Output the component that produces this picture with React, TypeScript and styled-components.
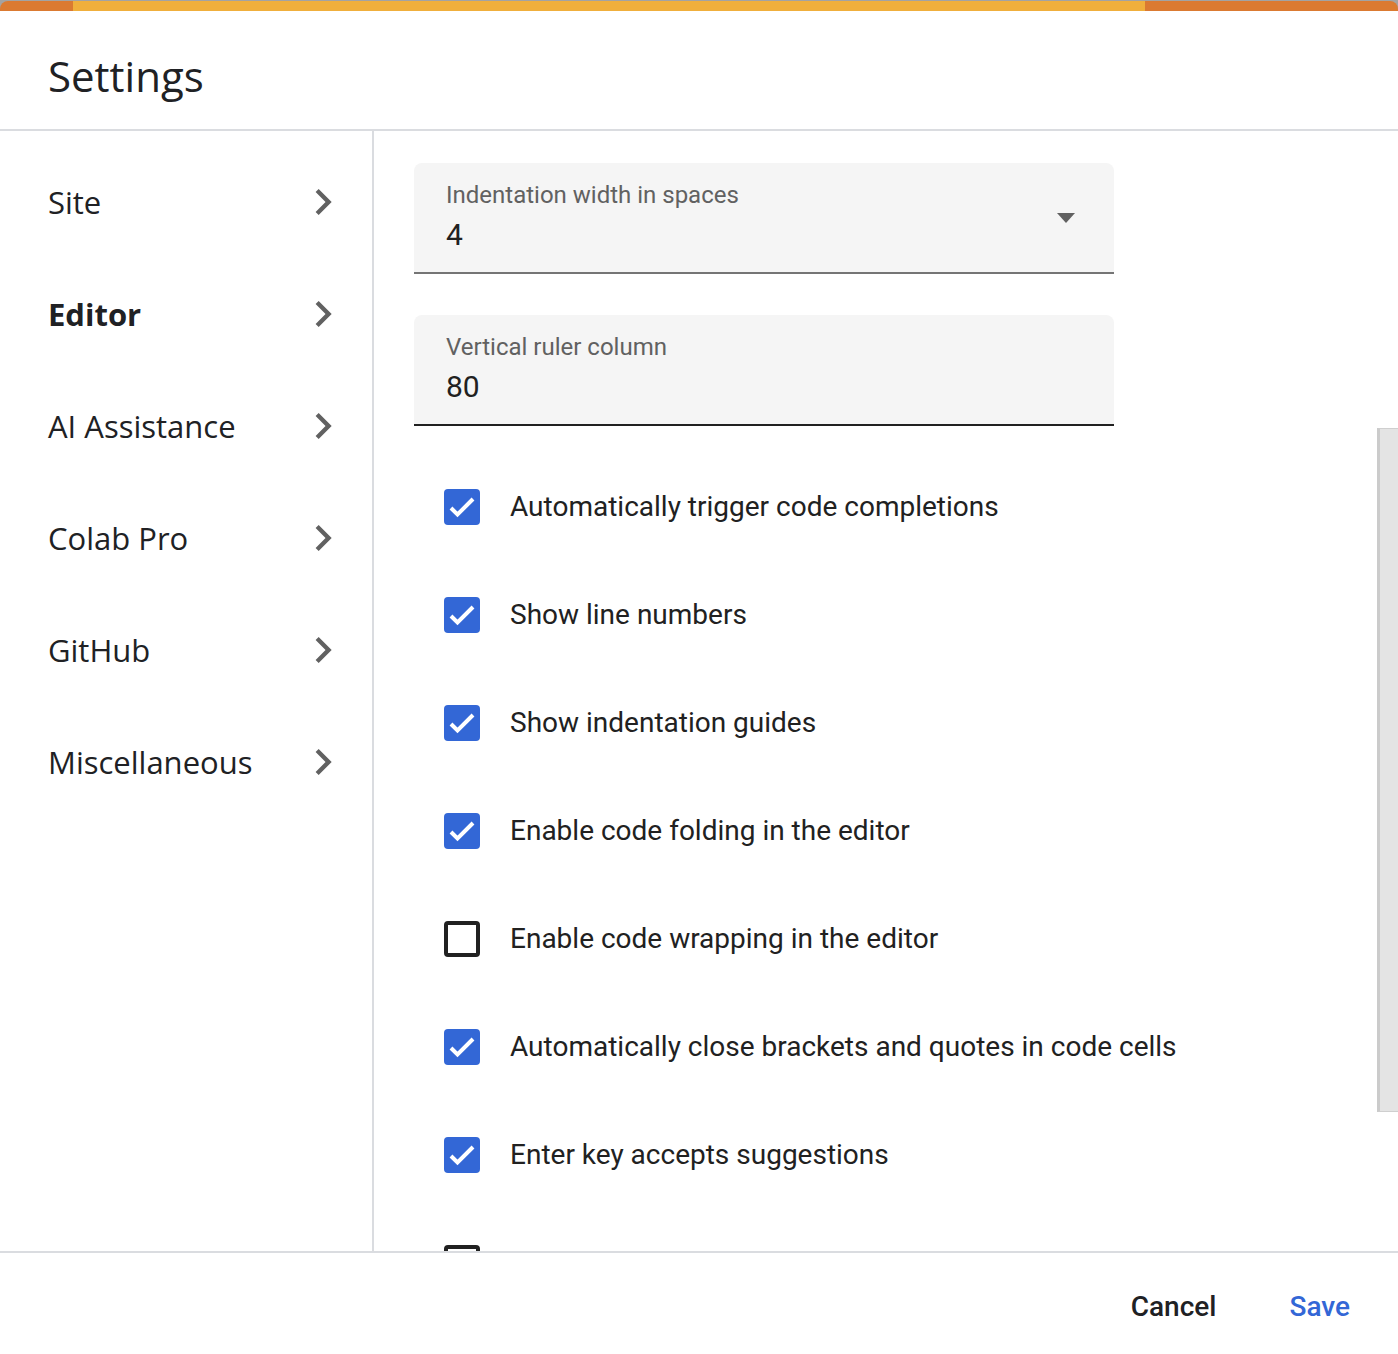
import * as React from 'react';
import styled, { createGlobalStyle } from 'styled-components';

const GlobalStyle = createGlobalStyle`
    html, body {
        margin: 0;
        padding: 0;
        background: #ffffff;
    }
    * {
        box-sizing: border-box;
    }
`;

const Dialog = styled.div`
    width: 1398px;
    height: 1354px;
    display: flex;
    flex-direction: column;
    background: #ffffff;
    overflow: hidden;
    font-family: Roboto, 'Liberation Sans', sans-serif;
    color: #202124;
`;

const TopStrip = styled.div`
    padding-top: 1px;
    background: #a3a3a3;
    flex: 0 0 auto;
`;

const TopBar = styled.div`
    display: flex;
    height: 10px;
    border-radius: 8px 8px 0 0;
    overflow: hidden;
`;

const TopSegment = styled.div<{ $width?: number; $color: string }>`
    flex: ${(p) => (p.$width ? `0 0 ${p.$width}px` : '1 1 auto')};
    background: ${(p) => p.$color};
`;

const Header = styled.div`
    flex: 0 0 auto;
    height: 120px;
    padding: 41px 0 0 48px;
    border-bottom: 2px solid #dadce0;
`;

const Title = styled.h1`
    margin: 0;
    font-family: 'Open Sans', sans-serif;
    font-size: 42px;
    line-height: 48px;
    font-weight: 400;
    color: #202124;
`;

const Body = styled.div`
    flex: 1 1 auto;
    display: flex;
    min-height: 0;
    position: relative;
`;

const Sidebar = styled.ul`
    flex: 0 0 374px;
    margin: 0;
    padding: 15px 0 0 0;
    list-style: none;
    border-right: 2px solid #dadce0;
`;

const NavItem = styled.li<{ $active?: boolean }>`
    height: 112px;
    display: flex;
    align-items: center;
    justify-content: space-between;
    padding: 0 25px 0 48px;
    font-family: 'Open Sans', sans-serif;
    font-size: 31px;
    font-weight: ${(p) => (p.$active ? 700 : 400)};
    color: #202124;
    cursor: pointer;
`;

const Chevron = styled.svg`
    width: 52px;
    height: 52px;
    margin-right: -2px;
    fill: #616161;
    flex: 0 0 auto;
`;

const Content = styled.div`
    flex: 1 1 auto;
    overflow: hidden;
    padding: 32px 0 0 40px;
`;

const Field = styled.div<{ $focused?: boolean }>`
    width: 700px;
    height: 111px;
    display: flex;
    align-items: center;
    background: #f5f5f5;
    border-radius: 8px 8px 0 0;
    border-bottom: 2px solid ${(p) => (p.$focused ? '#212121' : '#757575')};
    padding: 0 39px 0 32px;
    & + & {
        margin-top: 41px;
    }
`;

const FieldText = styled.div`
    flex: 1 1 auto;
    display: flex;
    flex-direction: column;
    padding-bottom: 4px;
`;

const FieldLabel = styled.label`
    font-size: 24px;
    line-height: 32px;
    color: #616161;
`;

const FieldValue = styled.div`
    margin-top: 6px;
    font-size: 30px;
    line-height: 36px;
    color: #212121;
`;

const DropArrow = styled.div`
    width: 0;
    height: 0;
    border-left: 9px solid transparent;
    border-right: 9px solid transparent;
    border-top: 10px solid #616161;
`;

const CheckList = styled.div`
    margin-top: 27px;
    display: flex;
    flex-direction: column;
`;

const CheckRow = styled.label`
    height: 108px;
    display: flex;
    align-items: center;
    padding-left: 30px;
    gap: 30px;
    font-size: 28px;
    line-height: 34px;
    color: #212121;
    cursor: pointer;
`;

const CheckBox = styled.span<{ $checked: boolean }>`
    width: 36px;
    height: 36px;
    flex: 0 0 auto;
    border-radius: 4px;
    display: flex;
    align-items: center;
    justify-content: center;
    background: ${(p) => (p.$checked ? '#3367d6' : '#ffffff')};
    border: ${(p) => (p.$checked ? 'none' : '4px solid #212121')};
`;

const Tick = styled.svg`
    width: 36px;
    height: 36px;
    fill: none;
    stroke: #ffffff;
    stroke-width: 4;
`;

const ScrollThumb = styled.div`
    position: absolute;
    right: 0;
    top: 297px;
    width: 21px;
    height: 684px;
    background: #e4e4e4;
    border: 1px solid #cfcfcf;
    border-left: 3px solid #cbcbcb;
    border-right: none;
`;

const Footer = styled.div`
    flex: 0 0 103px;
    display: flex;
    justify-content: flex-end;
    align-items: center;
    gap: 73px;
    padding: 6px 48px 0 0;
    border-top: 2px solid #dadce0;
`;

const FooterButton = styled.button<{ $primary?: boolean }>`
    border: none;
    background: none;
    padding: 0;
    font-family: Roboto, 'Liberation Sans', sans-serif;
    font-size: 28px;
    font-weight: 500;
    color: ${(p) => (p.$primary ? '#3367d6' : '#202124')};
    cursor: pointer;
`;

const navItems = ['Site', 'Editor', 'AI Assistance', 'Colab Pro', 'GitHub', 'Miscellaneous'];

const options = [
    { label: 'Automatically trigger code completions', checked: true },
    { label: 'Show line numbers', checked: true },
    { label: 'Show indentation guides', checked: true },
    { label: 'Enable code folding in the editor', checked: true },
    { label: 'Enable code wrapping in the editor', checked: false },
    { label: 'Automatically close brackets and quotes in code cells', checked: true },
    { label: 'Enter key accepts suggestions', checked: true },
    { label: '', checked: false },
];

export default function App(): React.ReactElement {
    return (
        <Dialog>
            <GlobalStyle />
            <TopStrip>
                <TopBar>
                    <TopSegment $width={73} $color="#db7a31" />
                    <TopSegment $color="#f0af3c" />
                    <TopSegment $width={253} $color="#db7a31" />
                </TopBar>
            </TopStrip>
            <Header>
                <Title>Settings</Title>
            </Header>
            <Body>
                <Sidebar>
                    {navItems.map((item) => (
                        <NavItem key={item} $active={item === 'Editor'}>
                            {item}
                            <Chevron viewBox="0 0 24 24">
                                <path d="M10 6L8.59 7.41 13.17 12l-4.58 4.59L10 18l6-6z" />
                            </Chevron>
                        </NavItem>
                    ))}
                </Sidebar>
                <Content>
                    <Field>
                        <FieldText>
                            <FieldLabel>Indentation width in spaces</FieldLabel>
                            <FieldValue>4</FieldValue>
                        </FieldText>
                        <DropArrow />
                    </Field>
                    <Field $focused>
                        <FieldText>
                            <FieldLabel>Vertical ruler column</FieldLabel>
                            <FieldValue>80</FieldValue>
                        </FieldText>
                    </Field>
                    <CheckList>
                        {options.map((opt, i) => (
                            <CheckRow key={i}>
                                <CheckBox $checked={opt.checked}>
                                    {opt.checked && (
                                        <Tick viewBox="0 0 36 36">
                                            <polyline points="7,19 13.5,25.5 29,10" />
                                        </Tick>
                                    )}
                                </CheckBox>
                                {opt.label}
                            </CheckRow>
                        ))}
                    </CheckList>
                </Content>
                <ScrollThumb />
            </Body>
            <Footer>
                <FooterButton>Cancel</FooterButton>
                <FooterButton $primary>Save</FooterButton>
            </Footer>
        </Dialog>
    );
}
